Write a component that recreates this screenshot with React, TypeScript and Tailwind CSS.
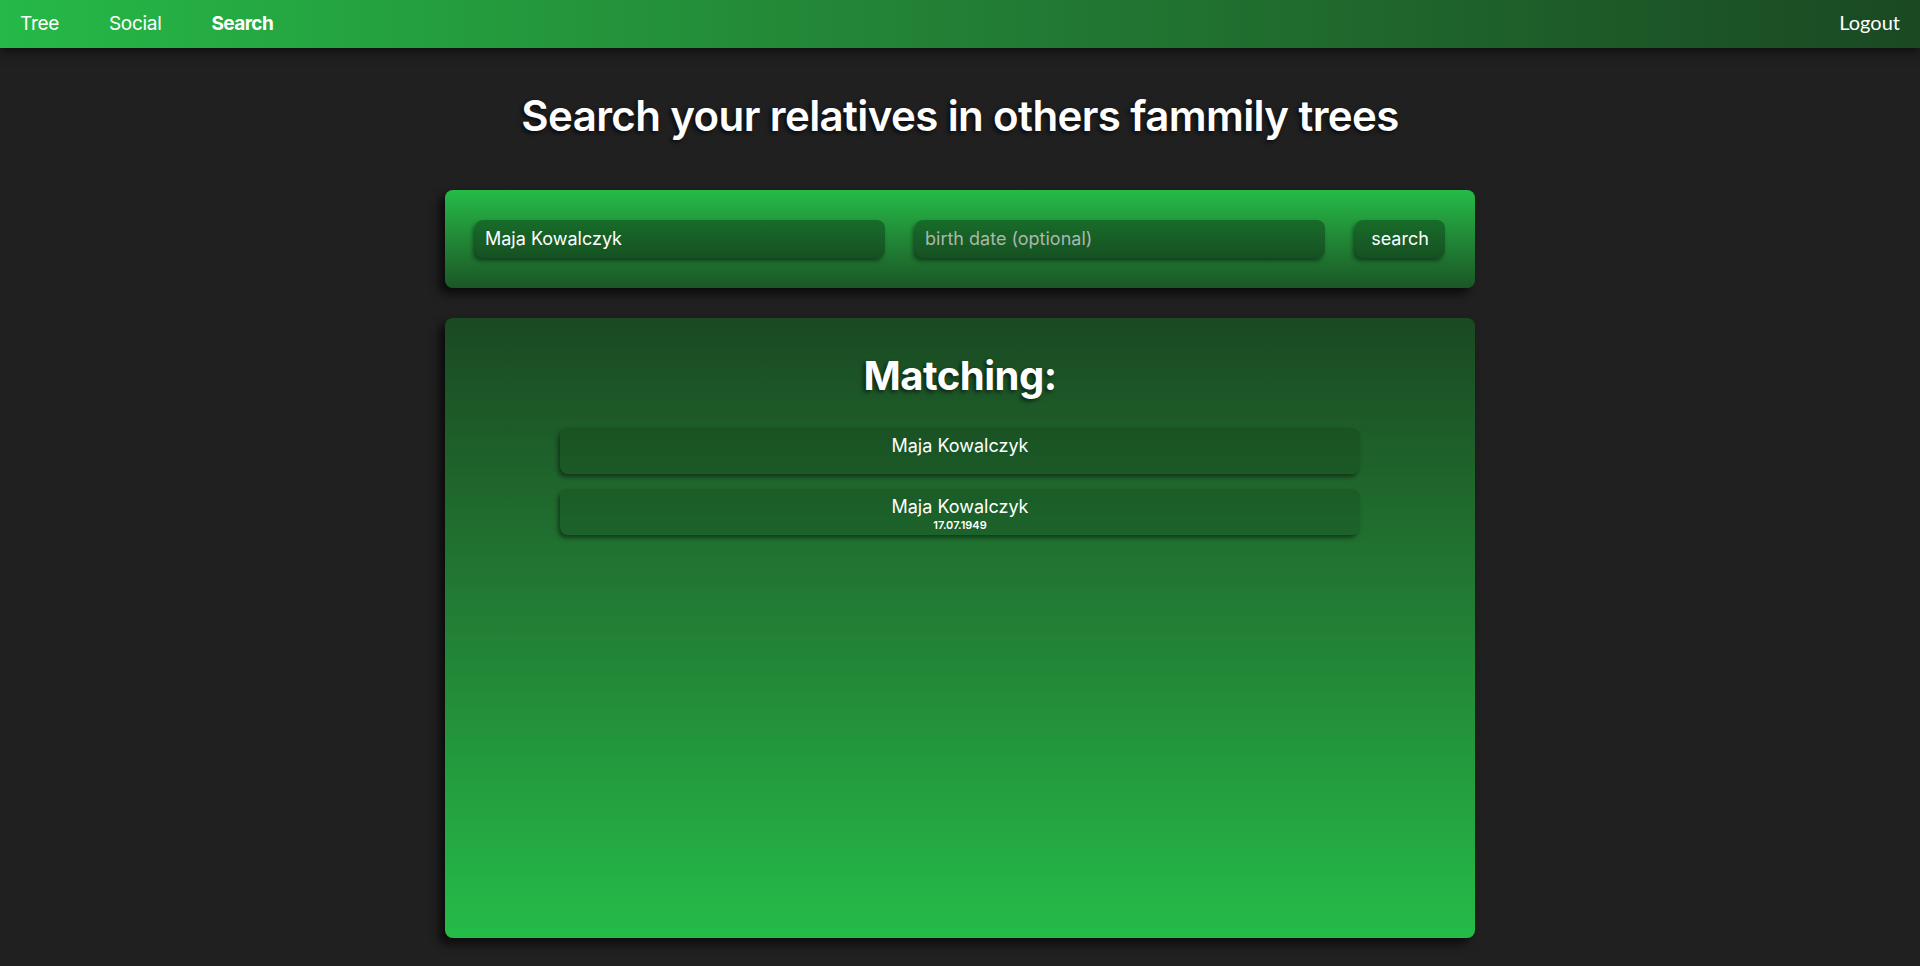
import { useState } from "react";

const results = [
  { name: "Maja Kowalczyk", date: "" },
  { name: "Maja Kowalczyk", date: "17.07.1949" },
];

export default function App() {
  const [name, setName] = useState("Maja Kowalczyk");
  const [date, setDate] = useState("");

  return (
    <div className="min-h-screen bg-[#202020] text-white font-['Inter',sans-serif]">
      {/* Nawigacja */}
      <nav className="relative z-10 h-12 flex items-center justify-between bg-gradient-to-r from-[#25b947] to-[#1a4922] shadow-[0_4px_10px_rgba(0,0,0,0.55)]">
        <div className="flex items-center gap-[50px] pl-5 text-[19px] tracking-[-0.3px]">
          <a className="cursor-pointer">Tree</a>
          <a className="cursor-pointer">Social</a>
          <a className="cursor-pointer font-bold tracking-[-0.6px]">Search</a>
        </div>
        <button className="pr-5 pb-1 text-[20px] leading-6 font-['Lato',sans-serif] cursor-pointer">Logout</button>
      </nav>

      <main className="flex flex-col items-center pb-7">
        <h1 className="mt-[44px] text-[42px] leading-[48px] font-semibold tracking-[-0.6px] [text-shadow:-2px_2px_4px_rgba(0,0,0,0.7)]">
          Search your relatives in others fammily trees
        </h1>

        {/* Formularz */}
        <div className="mt-[50px] w-[1030px] p-[30px] rounded-lg flex gap-[30px] bg-gradient-to-b from-[#24bc48] to-[#1b5726] shadow-[-6px_6px_10px_rgba(0,0,0,0.65)]">
          <input
            value={name}
            onChange={(e) => setName(e.target.value)}
            className="w-[410px] h-[38px] px-[10px] pb-[2px] rounded-lg bg-black/30 text-[18px] text-white outline-none shadow-[-2px_3px_4px_rgba(0,0,0,0.45)]"
          />
          <input
            value={date}
            onChange={(e) => setDate(e.target.value)}
            placeholder="birth date (optional)"
            className="w-[410px] h-[38px] px-[10px] pb-[2px] rounded-lg bg-black/30 text-[18px] text-white placeholder:text-[#a9b8ac] outline-none shadow-[-2px_3px_4px_rgba(0,0,0,0.45)]"
          />
          <button className="w-[90px] h-[38px] pb-[2px] rounded-lg bg-black/30 text-[18px] cursor-pointer shadow-[-2px_3px_4px_rgba(0,0,0,0.45)]">
            search
          </button>
        </div>

        {/* Wyniki */}
        <div className="mt-[30px] w-[1030px] h-[620px] rounded-lg bg-gradient-to-b from-[#1a4922] to-[#24bc48] shadow-[-6px_6px_10px_rgba(0,0,0,0.65)] flex flex-col items-center pt-[34px]">
          <h2 className="text-[40px] leading-[48px] font-bold tracking-[-0.5px] [text-shadow:-2px_2px_4px_rgba(0,0,0,0.6)]">
            Matching:
          </h2>
          <div className="mt-[28px] flex flex-col gap-[15px]">
            {results.map((r, i) => (
              <div
                key={i}
                className="w-[800px] h-[46px] pt-[7px] rounded-lg bg-black/10 flex flex-col items-center shadow-[-2px_3px_4px_rgba(0,0,0,0.45)]"
              >
                <span className="text-[18px] leading-[22px]">{r.name}</span>
                {r.date && <span className="text-[11px] leading-[14px] font-semibold">{r.date}</span>}
              </div>
            ))}
          </div>
        </div>
      </main>
    </div>
  );
}
